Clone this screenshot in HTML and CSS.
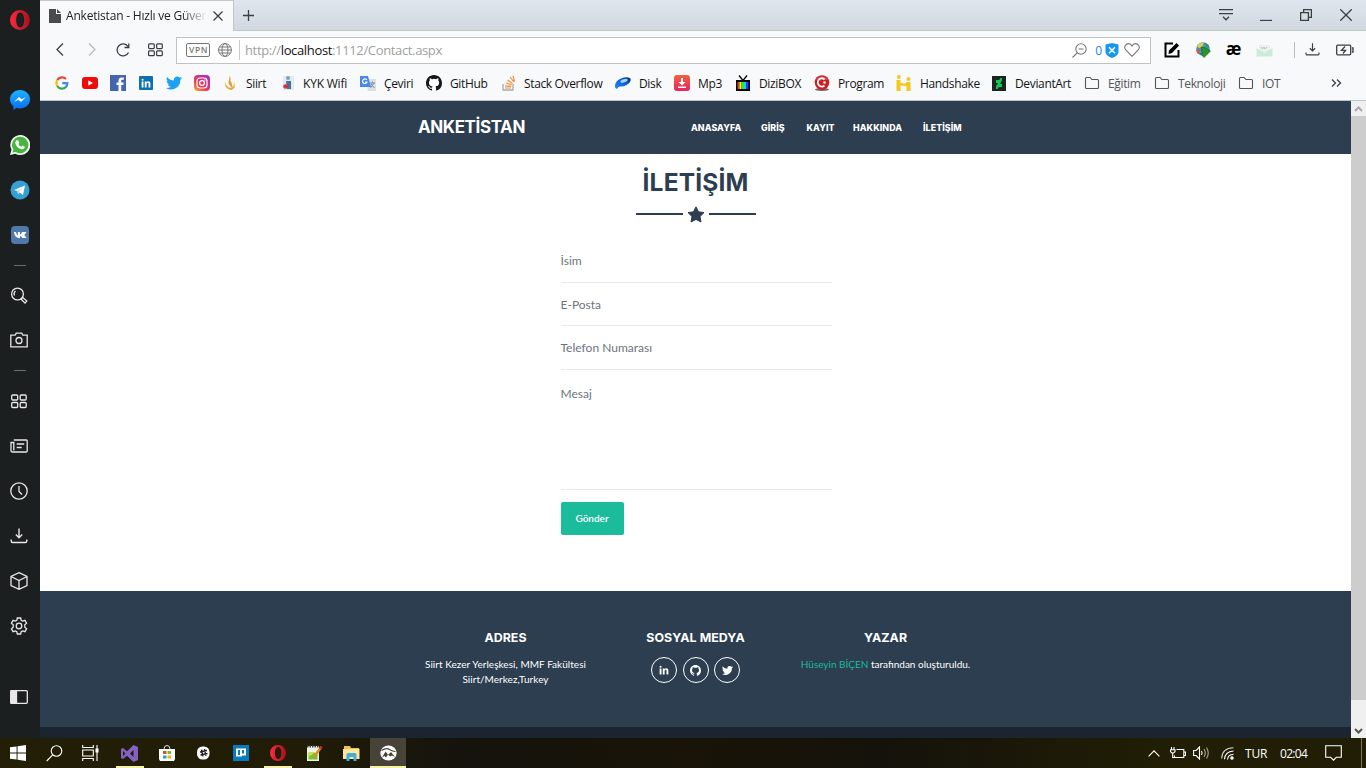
FILE: index.html
```html
<!DOCTYPE html>
<html lang="tr">
<head>
<meta charset="utf-8">
<title>Anketistan - Hızlı ve Güvenilir</title>
<link rel="stylesheet" href="styles.css">
</head>
<body>
<svg class="defs" width="0" height="0">
  <defs>
    <linearGradient id="gOp" x1="0" x2="1"><stop offset="0" stop-color="#ff2a3c"/><stop offset="1" stop-color="#a8101f"/></linearGradient>
    <linearGradient id="gMs" x1="0" y1="0" x2="0" y2="1"><stop offset="0" stop-color="#19b4ff"/><stop offset="1" stop-color="#0a6cf5"/></linearGradient>
    <linearGradient id="gIg" x1="0" y1="1" x2=".8" y2="0"><stop offset="0" stop-color="#fdb63b"/><stop offset=".4" stop-color="#ee3a50"/><stop offset="1" stop-color="#a52fc2"/></linearGradient>
    <linearGradient id="gMp" x1="0" y1="0" x2="0" y2="1"><stop offset="0" stop-color="#f4613f"/><stop offset="1" stop-color="#e8235f"/></linearGradient>
    <linearGradient id="gDk" x1="0" y1="1" x2="1" y2="0"><stop offset="0" stop-color="#1f8bff"/><stop offset=".6" stop-color="#0b5fd0"/><stop offset="1" stop-color="#08275e"/></linearGradient>
    <symbol id="opera" viewBox="0 0 20 20"><path fill="url(#gOp)" fill-rule="evenodd" d="M10 0a10 10 0 1 0 0 20a10 10 0 1 0 0-20zM10.200 2.500c2.500 0 4 3.300 4 7.500s-1.500 7.500-4 7.500s-4-3.300-4-7.500s1.500-7.500 4-7.500z"/></symbol>
    <symbol id="grid" viewBox="0 0 18 18"><g fill="none" stroke="currentColor" stroke-width="1.300"><rect x="1.700" y="3" width="6" height="5" rx="1"/><rect x="10.200" y="3" width="6" height="5" rx="1"/><rect x="1.700" y="10.500" width="6" height="5" rx="1"/><rect x="10.200" y="10.500" width="6" height="5" rx="1"/></g></symbol>
    <symbol id="github" viewBox="0 0 16 16"><path fill="currentColor" d="M8 0C3.580 0 0 3.580 0 8c0 3.540 2.290 6.530 5.470 7.590.4.070.55-.17.55-.38v-1.490c-2.010.37-2.530-.49-2.690-.94-.09-.23-.48-.94-.82-1.130-.28-.15-.68-.52-.01-.53.63-.01 1.080.58 1.230.82.72 1.210 1.870.87 2.330.66.07-.52.28-.87.51-1.070-1.780-.2-3.640-.89-3.640-3.950 0-.87.31-1.590.82-2.150-.08-.2-.36-1.020.08-2.120 0 0 .67-.21 2.200.82a7.600 7.600 0 0 1 4 0c1.530-1.040 2.200-.82 2.200-.82.44 1.100.16 1.920.08 2.120.51.56.82 1.270.82 2.150 0 3.070-1.870 3.750-3.650 3.950.29.25.54.73.54 1.480v2.200c0 .21.15.46.55.38A8 8 0 0 0 16 8c0-4.420-3.580-8-8-8z"/></symbol>
    <symbol id="twitter" viewBox="0 0 24 24"><path fill="currentColor" d="M24 4.600a10 10 0 0 1-2.800.8 5 5 0 0 0 2.100-2.700c-1 .6-2 1-3.100 1.200a4.900 4.900 0 0 0-8.400 4.500A14 14 0 0 1 1.700 3.100a4.900 4.900 0 0 0 1.500 6.600 5 5 0 0 1-2.200-.6 4.900 4.900 0 0 0 3.900 4.900 5 5 0 0 1-2.200.1 4.900 4.900 0 0 0 4.600 3.400A10 10 0 0 1 0 19.500 14 14 0 0 0 21.500 7.100 10 10 0 0 0 24 4.600z"/></symbol>
    <symbol id="linkedin" viewBox="0 0 16 16"><path fill="currentColor" d="M1 5.500h3V15H1zM2.500 1a1.700 1.700 0 1 1 0 3.400a1.700 1.700 0 0 1 0-3.400zM6 5.500h2.900v1.300c.5-.9 1.500-1.500 2.800-1.500 2.700 0 3.300 1.700 3.300 4.200V15h-3v-5c0-1.200-.1-2.300-1.500-2.300S9 8.900 9 10v5H6z"/></symbol>
    <symbol id="folder" viewBox="0 0 16 16"><path fill="none" stroke="#555" stroke-width="1.100" d="M1.500 3.500a1 1 0 0 1 1-1h3.600l1.800 2h5.600a1 1 0 0 1 1 1v7a1 1 0 0 1-1 1h-11a1 1 0 0 1-1-1z"/></symbol>
    <symbol id="download" viewBox="0 0 18 18"><path fill="none" stroke="currentColor" stroke-width="1.400" d="M9 1.500V10.500M5.800 7.500L9 10.700 12.200 7.500M1.200 12.500v1.500q0 1.500 1.500 1.500h12.600q1.500 0 1.500-1.500v-1.500"/></symbol>
  </defs>
</svg>

<div class="desktop">
  <aside class="side">
    <div class="cell first"><svg width="20" height="20"><use href="#opera"/></svg></div>
    <div class="cell"><svg width="20" height="20" viewBox="0 0 20 20"><path fill="url(#gMs)" d="M10 0C4.500 0 0 4 0 9.300c0 2.900 1.300 5.300 3.400 7V20l3.100-1.900c1.100.3 2.300.5 3.500.5 5.500 0 10-4 10-9.300S15.500 0 10 0z"/><path fill="#fff" d="M4 12l5-5 2.500 2.300L16 7l-5 5-2.500-2.300z"/></svg></div>
    <div class="cell"><svg width="20" height="20" viewBox="0 0 20 20"><path fill="#f4f4ee" d="M10 0a10 10 0 1 1-4.600 18.700L0 20l1.500-5.200A10 10 0 0 1 10 0z"/><path fill="#45b53d" d="M10 1.800a8.200 8.200 0 1 1-4.300 15.100l-3.200.7.9-3.100A8.200 8.200 0 0 1 10 1.800z"/><path fill="#fff" d="M7 5.300l1.300.2 1 2.200-1 1.200a6 6 0 0 0 3 2.800l1.200-1.200 2.200 1.100c.2 2-1.500 2.900-3 2.700-3.500-.6-6-3.500-6.400-6.200C5.200 6.700 6 5.600 7 5.300z"/></svg></div>
    <div class="cell"><svg width="20" height="20" viewBox="0 0 20 20"><circle cx="10" cy="10" r="9.500" fill="#36a0d4"/><path fill="#fff" d="M4 10l11-4.500-2 9.500-3.500-2.500L8 14l-.6-3z"/><path fill="#b9d8e8" d="M7.400 11L13 7l-4 5-1 2z"/></svg></div>
    <div class="cell"><svg width="18" height="18" viewBox="0 0 18 18"><rect width="18" height="18" rx="4" fill="#5078aa"/><path fill="#fff" d="M3 6h2c.3 2 1 3 1.800 3.400V6H9v2.500c1-.3 1.700-1.400 2.100-2.500h2c-.3 1.300-1 2.300-2 3 1.100.6 2 1.600 2.500 3h-2.300c-.4-1-1.200-1.700-2.300-1.900V12C5.500 12.200 3.400 10 3 6z"/><path fill="#fff" d="M12 6h3.500l-2.200 3 2.400 3H13l-2-3z"/></svg></div>
    <div class="rule"></div>
    <div class="cell low"><svg width="18" height="18" viewBox="0 0 18 18" class="ln"><circle cx="7.500" cy="7" r="5.900"/><path d="M4.500 8.500a3.600 3.600 0 0 1 1-4.500M11.500 11.500l1.300-1 4 3.600-1.800 2-3.800-3.800z"/></svg></div>
    <div class="cell low"><svg width="18" height="18" viewBox="0 0 18 18" class="ln"><path d="M.8 4.200h4.400l1-2h5.600l1 2h4.400v11.600H.8z"/><circle cx="9" cy="9.500" r="3"/></svg></div>
    <div class="rule r2"></div>
    <div class="cell"><svg width="18" height="18" class="off"><use href="#grid"/></svg></div>
    <div class="cell"><svg width="18" height="18" viewBox="0 0 18 18" class="ln"><path d="M3.800 3h12.400q1 0 1 1v10q0 1-1 1H2.500q-1.500 0-1.500-1.500V5.500h2.800v8M6.700 7h7.500M6.700 10.500h5"/></svg></div>
    <div class="cell"><svg width="18" height="18" viewBox="0 0 18 18" class="ln"><circle cx="9" cy="9" r="8.200"/><path d="M9 4v5.500l3 3"/></svg></div>
    <div class="cell"><svg width="18" height="18" class="off"><use href="#download"/></svg></div>
    <div class="cell"><svg width="18" height="18" viewBox="0 0 18 18" class="ln"><path d="M9 .7l8 3.800v9L9 17.300l-8-3.800v-9zM1 4.500l8 4 8-4M9 8.500v8.800"/></svg></div>
    <div class="cell"><svg width="18" height="18" viewBox="0 0 18 18" class="ln"><path d="M7.300 1h3.400l.5 2.300 1.400.8 2.300-.8 1.700 2.900-1.800 1.600v2.400l1.800 1.600-1.700 2.900-2.300-.8-1.400.8-.5 2.300H7.300l-.5-2.300-1.400-.8-2.300.8-1.700-2.900 1.800-1.600V7.800L1.400 6.200l1.700-2.900 2.300.8 1.400-.8z"/><circle cx="9" cy="9" r="2.800"/></svg></div>
    <div class="cell last"><svg width="18" height="14" viewBox="0 0 18 14" class="ln"><rect x=".7" y=".7" width="16.600" height="12.600" rx="1"/><path fill="#e8e8e8" d="M1 1h5.500v12H1z"/></svg></div>
  </aside>

  <div class="browser">
    <div class="tabs">
      <div class="tab">
        <svg width="12" height="14" viewBox="0 0 12 14"><path fill="#4b4b4b" d="M0 0h7v5h5v9H0z"/><path fill="#4b4b4b" d="M8 0l4 4H8z"/></svg>
        <span class="tabname">Anketistan - Hızlı ve Güver</span>
        <svg width="10" height="10" viewBox="0 0 10 10" class="dk"><path d="M.5.5l9 9M9.500.5l-9 9"/></svg>
      </div>
      <svg class="plus dk" width="11" height="11" viewBox="0 0 11 11"><path d="M5.500 0v11M0 5.500h11"/></svg>
      <div class="wins">
        <svg width="14" height="12" viewBox="0 0 14 12" class="dk"><path d="M0 .7h14M0 4.700h14M4 7.800l3 3 3-3"/></svg>
        <svg width="12" height="12" viewBox="0 0 12 12" class="dk"><path d="M0 11.500h12"/></svg>
        <svg width="12" height="12" viewBox="0 0 12 12" class="dk"><path d="M.6 3.600h7.800v7.800H.6zM3.600 3.600v-3h7.800v7.800h-3"/></svg>
        <svg width="12" height="12" viewBox="0 0 12 12" class="dk"><path d="M.3.300l11.400 11.400M11.700.3L.3 11.700"/></svg>
      </div>
    </div>

    <div class="toolbar">
      <div class="navs">
        <svg width="8" height="13" viewBox="0 0 8 13" class="dk"><path d="M7 .5l-6 6 6 6"/></svg>
        <svg width="8" height="13" viewBox="0 0 8 13" class="dk dim"><path d="M1 .5l6 6-6 6"/></svg>
        <svg width="14" height="14" viewBox="0 0 14 14" class="dk rl"><path d="M12.500 9.500A6 6 0 1 1 12 3.500M12.800.5V4.500H8.500"/></svg>
        <svg width="17" height="17" class="gr"><use href="#grid"/></svg>
      </div>
      <div class="addr">
        <span class="vpn">VPN</span>
        <svg width="14" height="14" viewBox="0 0 14 14" class="globe"><circle cx="7" cy="7" r="6.400"/><ellipse cx="7" cy="7" rx="3" ry="6.400"/><path d="M.6 7h12.800M1.500 4h11M1.500 10h11"/></svg>
        <span class="url">http://<b>localhost</b>:1112/Contact.aspx</span>
        <svg width="15" height="15" viewBox="0 0 15 15" class="gy"><circle cx="9" cy="6" r="5.200"/><path d="M5.200 9.800L.5 14.500M6.500 6h5"/></svg>
        <span class="zero">0</span>
        <svg width="14" height="15" viewBox="0 0 14 15"><path fill="#1497f0" d="M7 0l6.500 1.500V9q0 3.500-6.500 6Q.5 12.500.5 9V1.500z"/><path stroke="#fff" stroke-width="1.500" d="M4 4.200l6 6M10 4.200l-6 6"/></svg>
        <svg width="16" height="14" viewBox="0 0 16 14" class="gy heart"><path d="M8 13.300L1.800 7C-1 3.500 2.300.6 4.500.6 6.500.6 7.500 2 8 3 8.500 2 9.500.6 11.500.6c2.200 0 5.500 2.900 2.700 6.400z"/></svg>
      </div>
      <div class="exts">
        <svg width="16" height="16" viewBox="0 0 16 16"><path fill="none" stroke="#000" stroke-width="2" d="M9 1.500H1.500v13h13V8"/><path d="M4.500 12l.5-3.500L12.500 1 15 3.500 8 11z"/></svg>
        <svg width="16" height="16" viewBox="0 0 16 16"><circle cx="8" cy="7" r="6.800" fill="#4a8fcf"/><path fill="#e8d23c" d="M2 4q3-4 7-3.500L7 5 4 6z"/><path fill="#3d9a46" d="M10 1q4 1 4.500 5L11 5z"/><path fill="#da5a32" d="M1.200 7l3 .5.5 4-2 .5q-1.500-2-1.500-5z"/><path fill="#26952d" stroke="#14671a" stroke-width=".6" d="M6 5l5 1 4.500 3L13 11.500 9 15.500 5.500 11.500h2z"/></svg>
        <span class="ae">æ</span>
        <svg width="17" height="14" viewBox="0 0 17 14"><path fill="#e9f1ed" d="M3 2h11v8H3z"/><path fill="#cdebdc" d="M.5 5l8 5 8-5v8.500H.5z"/><path fill="none" stroke="#b9c7c1" d="M5 4l1.500 2L8 4l1 2 2-2"/></svg>
        <i></i>
        <svg width="15" height="15" class="gr"><use href="#download"/></svg>
        <svg width="18" height="12" viewBox="0 0 18 12" class="dk"><rect x=".7" y="1.200" width="14" height="9.600" rx="1"/><path d="M16 4h1v4h-1M9 2.500L5.500 6.300h4L7 9.500"/></svg>
      </div>
    </div>

    <nav class="marks">
      <a class="m27"><svg width="14" height="14" viewBox="0 0 14 14" fill="none" stroke-width="2.200"><path stroke="#ea4335" d="M2.300 4a5.400 5.400 0 0 1 8.600-1"/><path stroke="#fbbc05" d="M2.300 4a5.800 5.800 0 0 0 0 6"/><path stroke="#34a853" d="M2.300 10a5.400 5.400 0 0 0 8.600 1"/><path stroke="#4285f4" d="M7.300 7.200h5q0 2.500-1.600 4"/></svg></a>
      <a class="m28"><svg width="16" height="12" viewBox="0 0 16 12"><rect width="16" height="12" rx="3" fill="#f00b0b"/><path fill="#fff" d="M6.300 3.300L11 6 6.300 8.700z"/></svg></a>
      <a class="m29"><svg width="16" height="16" viewBox="0 0 16 16"><path fill="#4565ad" d="M0 0h16v16H0z"/><path fill="#fff" d="M8.500 16v-6H6.500V7.500h2V5.700C8.500 3.600 9.700 2.500 11.800 2.500h2v2.300h-1.400c-1 0-1.200.5-1.200 1.200v1.500h2.500l-.4 2.500h-2.100v6z"/></svg></a>
      <a class="m27"><svg width="14" height="14" viewBox="0 0 14 14"><rect width="14" height="14" rx="1" fill="#0a70b2"/><use href="#linkedin" x="2" y="2" width="10" height="10" color="#fff"/></svg></a>
      <a class="m28"><svg width="16" height="16" color="#1da1f2"><use href="#twitter"/></svg></a>
      <a class="m28"><svg width="16" height="16" viewBox="0 0 16 16"><rect width="16" height="16" rx="4" fill="url(#gIg)"/><rect x="3" y="3" width="10" height="10" rx="3" fill="none" stroke="#fff" stroke-width="1.200"/><circle cx="8" cy="8" r="2.400" fill="none" stroke="#fff" stroke-width="1.200"/><circle cx="11" cy="5" r=".7" fill="#fff"/></svg></a>
      <a class="m58"><svg width="16" height="16" viewBox="0 0 16 16"><path fill="#e29b37" d="M7 1c3 2 .5 4 2 6s2 5-1 7c3-3-2-4-1.500-7S8 3 7 1z"/><path fill="#f2c15a" d="M3 7c1 3 2.500 5 4.500 7-3 0-5.500-4-4.500-7zM12.500 6c1 4-1 7-4.500 9 1.500-3 4.500-5 4.500-9z"/><path fill="#e8a53a" d="M3 9q1 5 6 6 4-1 4-5-2 3-4 3-3 0-6-4z"/></svg>Siirt</a>
      <a class="m80"><svg width="16" height="16" viewBox="0 0 16 16"><path fill="#e5eaf0" d="M3 1h11v14H3z"/><circle cx="8" cy="3" r="2" fill="#7fa0b8"/><path fill="#467099" d="M6 6h5v8H7z"/><circle cx="5.500" cy="11.500" r="2.300" fill="#de2e37"/></svg><span class="kyk">KYK Wifi</span></a>
      <a class="m66"><svg width="16" height="16" viewBox="0 0 16 16"><path fill="#dcdfe3" d="M6 4h10v12H8z"/><path fill="#4a88ea" d="M0 1h8l3 11H0z"/><path fill="none" stroke="#fff" stroke-width="1.200" d="M6.800 5A2.300 2.300 0 1 0 7 7H5"/><path fill="none" stroke="#7f8c96" d="M10 8h5M12.500 6.500V8M14 8l-3.500 5M11 9l3.500 4"/></svg>Çeviri</a>
      <a class="m76"><svg width="16" height="16" color="#161616"><use href="#github"/></svg>GitHub</a>
      <a class="m113 so"><svg width="15" height="16" viewBox="0 0 15 16" fill="none"><path stroke="#aaa" stroke-width="1.300" d="M1 9v6h10V9"/><path stroke="#ef8d3c" stroke-width="1.200" d="M3 13h6M3.200 10.800l6 .6M4 8l5.600 1.800M5.500 5l5 3.500M8 2l4 5M11 1l1.500 5.500"/></svg>Stack Overflow</a>
      <a class="m59"><svg width="16" height="16" viewBox="0 0 16 16"><path fill="url(#gDk)" d="M0 12q-.5-5 5-8 6-3 10.500-.5 1 4-4 6.500Q8 12 5 11.500 3 11.500 2 14 .5 13.500 0 12z"/><ellipse cx="9" cy="5.800" rx="3.800" ry="1.500" transform="rotate(-18 9 5.800)" fill="#a5d4fb"/></svg>Disk</a>
      <a class="m61"><svg width="16" height="16" viewBox="0 0 16 16"><rect width="16" height="16" rx="3" fill="url(#gMp)"/><path fill="#fff" d="M7 3h2v4h2.500L8 10.500 4.500 7H7zM4 11.500h8V13H4z"/></svg>Mp3</a>
      <a class="m79"><svg width="16" height="16" viewBox="0 0 16 16"><path d="M1 5h14v11H1z"/><path fill="none" stroke="#000" stroke-width="1.300" d="M4 .5l4 5 4-5"/><path fill="#f33" d="M2.500 7h2v7h-2z"/><path fill="#ff0" d="M4.500 7h2v7h-2z"/><path fill="#2e3" d="M6.500 7h2.500v7H6.500z"/><path fill="#0df" d="M9 7h2v7H9z"/><path fill="#33f" d="M11 7h2.500v7H11z"/></svg>DiziBOX</a>
      <a class="m82"><svg width="16" height="16" viewBox="0 0 16 16"><ellipse cx="8" cy="14.500" rx="7" ry="1.500" fill="#7a5d5d"/><circle cx="8" cy="7.500" r="7.300" fill="#cf1d22"/><path fill="#f6c8c8" opacity=".5" d="M2 5q6-7 12 0-6-2-12 0z"/><path fill="none" stroke="#fff" stroke-width="1.800" d="M10.500 10.500a4 4 0 1 1 0-6"/><circle cx="10.500" cy="7.500" r="1.300" fill="#fff"/></svg>Program</a>
      <a class="m96"><svg width="16" height="16" viewBox="0 0 16 16" fill="#f4c81d"><circle cx="2.800" cy="2" r="2"/><circle cx="12.500" cy="4" r="2"/><path d="M.5 5h4v3l5 .5 1-1.500h4v9h-4v-5l-6-.5V16h-4z"/></svg>Handshake</a>
      <a class="m93"><svg width="14" height="15" viewBox="0 0 14 15"><path fill="#1d2421" d="M0 0h14v15H0z"/><path fill="#0bcd54" d="M10 2v2.500L8 8h2v3H6.800L5.500 13H4v-2.500L6 7H4V4h3.200L8.500 2z"/></svg><span class="da">DeviantArt</span></a>
      <a class="m69 fo"><svg width="16" height="16"><use href="#folder"/></svg>Eğitim</a>
      <a class="m84 fo"><svg width="16" height="16"><use href="#folder"/></svg>Teknoloji</a>
      <a class="m93 fo"><svg width="16" height="16"><use href="#folder"/></svg>IOT</a>
      <svg width="11" height="8" viewBox="0 0 11 8" class="dk"><path d="M1 .5L4.500 4 1 7.500M6 .5L9.500 4 6 7.500"/></svg>
    </nav>

    <div class="view">
      <div class="page">
        <header class="navbar"><div class="wrap">
          <span class="brand">ANKETİSTAN</span>
          <div class="menu"><a class="i70">ANASAYFA</a><a class="i45">GİRİŞ</a><a class="i47">KAYIT</a><a class="i70">HAKKINDA</a><a>İLETİŞİM</a></div>
        </div></header>
        <main>
          <h1>İLETİŞİM</h1>
          <div class="star"><i></i><svg width="18" height="17" viewBox="0 0 18 17"><path fill="#2c3e50" stroke="#2c3e50" stroke-linejoin="round" d="M9 .8l2.500 5 5.500.8-4 3.900 1 5.500-5-2.600-5 2.600 1-5.500-4-3.900 5.500-.8z"/></svg><i></i></div>
          <form>
            <div class="field">İsim</div>
            <div class="field f2">E-Posta</div>
            <div class="field">Telefon Numarası</div>
            <div class="field area">Mesaj</div>
            <button type="button">Gönder</button>
          </form>
        </main>
        <footer>
          <section><h4>ADRES</h4><p class="adr">Siirt Kezer Yerleşkesi, MMF Fakültesi<br>Siirt/Merkez,Turkey</p></section>
          <section><h4>SOSYAL MEDYA</h4><div class="soc">
            <a><svg width="10" height="10"><use href="#linkedin"/></svg></a><a><svg width="11" height="11"><use href="#github"/></svg></a><a><svg width="11" height="11"><use href="#twitter"/></svg></a>
          </div></section>
          <section><h4>YAZAR</h4><p><a class="author">Hüseyin BİÇEN</a> tarafından oluşturuldu.</p></section>
        </footer>
        <div class="copy"></div>
      </div>
      <div class="scroll">
        <svg width="9" height="6" viewBox="0 0 9 6"><path fill="none" stroke="#aaa" stroke-width="2" d="M1 5l3.500-3.500L8 5"/></svg>
        <div class="thumb"></div>
        <svg width="9" height="6" viewBox="0 0 9 6"><path fill="none" stroke="#555" stroke-width="2" d="M1 1l3.500 3.500L8 1"/></svg>
      </div>
    </div>
  </div>
</div>

<div class="taskbar">
  <div class="t36"><svg width="16" height="16" viewBox="0 0 17 17" fill="#fff"><path d="M0 2.500L7 1.500V8H0zM8 1.300L17 0v8H8zM0 9h7v6.500L0 14.500zM8 9h9v8l-9-1.300z"/></svg></div>
  <div class="t36"><svg width="17" height="17" viewBox="0 0 17 17" class="tl"><circle cx="10.500" cy="6" r="5.300"/><path d="M6.700 9.800L.7 16"/></svg></div>
  <div class="t36 tv"><svg width="17" height="16" viewBox="0 0 17 16" class="tl"><path d="M.7 0v2.500h10.600V0M.7 16v-2.500h10.600V16M.7 5h10.600v6H.7zM15 0v16"/><path fill="#fff" d="M14 4h2v3h-2z"/></svg></div>
  <div class="t37 run"><svg width="17" height="17" viewBox="0 0 17 17"><path fill="#8661c5" fill-rule="evenodd" d="M12.500 0L17 2v13l-4.500 2L6 10.700 2 14l-2-1V4l2-1 4 3.300zM12.500 5L9 8.500l3.500 3.500zM2 6v5l2.500-2.500z"/></svg></div>
  <div class="t37"><svg width="16" height="16" viewBox="0 0 16 16"><path fill="none" stroke="#ddd" d="M5 4q0-3.500 3-3.500T11 4"/><path fill="#fff" d="M0 4h16v10l-1 2H1l-1-2z"/><path fill="#e3502c" d="M4 6h3.500v3H4z"/><path fill="#7bb829" d="M8.500 6H12v3H8.500z"/><path fill="#249fd8" d="M4 10.500h3.500v3H4z"/><path fill="#f5b400" d="M8.500 10.500H12v3H8.500z"/></svg></div>
  <div class="t37"><svg width="13" height="14" viewBox="0 0 13 14"><rect width="12.500" height="13" y=".5" rx="5.500" fill="#fff"/><path stroke="#222" stroke-width="1.300" d="M4.500 3.500l1.500 7M7.500 3l1.500 7M3 6l7-1.500M3.500 9l7-1.500"/></svg></div>
  <div class="t37"><svg width="16" height="16" viewBox="0 0 16 16"><path fill="#087abe" d="M0 0h16v16H0z"/><path fill="#fff" d="M3 3.500h10v7H9v1H3z"/><path fill="#087abe" d="M5 5h2v5H5zM9 5h2v3.500H9z"/></svg></div>
  <div class="t37 run"><svg width="16" height="16"><use href="#opera"/></svg></div>
  <div class="t37"><svg width="17" height="16" viewBox="0 0 17 16"><path fill="#eef3e6" d="M1 1h12v15H1z"/><path fill="#72c532" d="M2.500 8h9v6.500h-9z"/><path fill="#c7df4e" d="M2.500 7h7l-7 5z"/><path stroke="#444" stroke-width="2" stroke-dasharray="1.500 1" d="M1 1.500h12"/><path stroke="#d98b29" stroke-width="2.500" d="M14.500 3L8 12"/><path stroke="#d22c2c" stroke-width="2.500" d="M15.500 1.500L14 3.700"/></svg></div>
  <div class="t37"><svg width="17" height="15" viewBox="0 0 17 15"><path fill="#efc14e" d="M1 0h6l1 2h8v4H1z"/><path fill="#fce79b" d="M0 3h16.500v10H0z"/><path fill="#43aedb" d="M3.500 8.500q0-1.500 1.500-1.500h7q1.500 0 1.500 1.500V15h-3v-4h-4v4h-3z"/></svg></div>
  <div class="t37 act"><svg width="17" height="16" viewBox="0 0 17 16"><ellipse cx="8.500" cy="8" rx="8.200" ry="7.600" fill="#fff"/><path fill="#484338" d="M2 12.500l3.500-6 2.500 3 1.500-1L11 7l4 5-3-1.500-2 1-2-2-2 3-1.500-1.500z"/><path fill="none" stroke="#484338" stroke-width="1.200" d="M1.500 5.500q5-3 8-1t6 2"/></svg></div>
  <div class="tray">
    <svg class="s1 tl" width="12" height="7" viewBox="0 0 12 7"><path d="M.6 6.300L6 .9l5.400 5.400"/></svg>
    <svg class="s2 tl" width="16" height="12" viewBox="0 0 16 12"><path d="M6.500 2.500h7.300v8H4.500V8.500M14 5h1.500v3.500H14M1.500 0v2.500M4 0v2.500M.5 2.800h4.500v2L3.500 6H2L.5 4.800zM2.700 6v4.500h2"/></svg>
    <svg class="s3 tl" width="16" height="14" viewBox="0 0 16 14"><path d="M.6 4.500h2.500L6.500 1v12L3.100 9.500H.6z"/><path d="M8.500 5q1.200 2 0 4"/><path opacity=".6" d="M11 3q2.500 4 0 8M13.500 1.500q3.500 5.500 0 11"/></svg>
    <svg class="s4 tl" width="13" height="13" viewBox="0 0 13 13"><path opacity=".8" d="M.7 11.500Q1 1 12.500.8"/><path d="M3.500 12.300Q4 4.500 12.500 4M6.500 12.500Q7 7.500 12.500 7.200"/><circle cx="11" cy="11" r="1.200" fill="#fff"/></svg>
    <span class="tur">TUR</span><span class="clock">02:04</span>
    <svg class="s5 tl" width="17" height="16" viewBox="0 0 17 16"><path d="M.7.7h15.600v11.600h-5l-2.800 2.800-2.800-2.800h-5z"/></svg>
    <i></i>
  </div>
</div>
</body>
</html>
```
FILE: styles.css
```css
* { box-sizing: border-box; }
body { margin: 0; width: 1366px; height: 768px; overflow: hidden; font-family: "Open Sans", sans-serif; font-size: 12px; color: #222; }
svg { flex: none; display: block; }
.defs { position: absolute; }
.desktop { display: flex; height: 738px; }

.side { width: 40px; background: #1b1f1f; color: #e8e8e8; display: flex; flex-direction: column; }
.cell { height: 45px; display: flex; align-items: center; justify-content: center; flex: none; }
.cell.first { height: 40px; margin-bottom: 37px; }
.cell.low { height: 44px; }
.cell.last { margin-top: 26px; }
.cell .ln, .cell .off { margin-right: 2px; }
.rule { height: 17px; display: flex; align-items: center; justify-content: center; }
.rule.r2 { height: 16px; padding-top: 1px; }
.rule::after { content: ""; width: 12px; height: 1px; background: #6c6f6f; }
.ln { fill: none; stroke: #e8e8e8; stroke-width: 1.3; }
.dk { fill: none; stroke: #3c3f42; stroke-width: 1.3; }
.dim { stroke: #bbb; }
.gr { color: #3c3f42; }
.gy { fill: none; stroke: #777; stroke-width: 1.1; }

.browser { flex: 1; display: flex; flex-direction: column; background: #f7f9fb; }
.tabs { height: 31px; background: linear-gradient(#dfe6ee, #d2d8df); border-bottom: 1px solid #c3c7ca; display: flex; align-items: flex-start; }
.tab { width: 194px; height: 31px; background: #f7f9fb; border-top: 1px solid #c8c8c8; border-right: 1px solid #c3c7ca; display: flex; align-items: center; padding-left: 9px; }
.tabname { width: 141px; margin: -1px 12px 0 5px; white-space: nowrap; overflow: hidden; letter-spacing: -.2px; -webkit-mask-image: linear-gradient(90deg, #000 82%, transparent); mask-image: linear-gradient(90deg, #000 82%, transparent); }
.tab .dk { margin-left: -6px; }
.plus { margin: 10px 0 0 9px; }
.wins { margin-left: auto; display: flex; gap: 27px; padding: 9px 14px 0 0; }
.wins svg:first-child { margin-right: 1px; }
.wins svg:nth-child(2) { margin-right: 1px; margin-left: -1px; }
.wins svg:nth-child(3) { margin-right: 1px; }
.toolbar { height: 37px; display: flex; align-items: center; }
.navs { width: 136px; display: flex; align-items: center; padding-left: 16px; }
.navs svg:nth-child(2) { margin-left: 24px; }
.navs .rl { margin-left: 20px; }
.navs .gr { margin-left: 17px; }
.addr { width: 975px; height: 27px; margin-top: 1px; background: #fff; border: 1px solid #c0c3c6; display: flex; align-items: center; padding: 0 10px 0 9px; }
.vpn { width: 24px; height: 14px; border: 1px solid #777; border-radius: 2px; font-size: 8.5px; line-height: 12px; font-weight: 600; text-align: center; color: #777; letter-spacing: .6px; padding-left: 1px; }
.globe { margin-left: 8px; fill: none; stroke: #777; }
.url { margin-left: 7px; padding-left: 5px; border-left: 1px solid #ccc; line-height: 20px; color: #a0a0a0; font-size: 13px; letter-spacing: -.35px; margin-right: auto; }
.url b { font-weight: 400; color: #111; }
.zero { color: #1a86e0; margin: 0 3px 0 8px; }
.heart { margin-left: 5px; }
.exts { flex: 1; display: flex; align-items: center; padding-left: 13px; }
.exts svg:nth-child(2) { margin-left: 15px; }
.ae { font: bold 17px/18px "Open Sans", sans-serif; color: #000; width: 16px; margin: -2px 0 0 14px; letter-spacing: -1px; display: flex; justify-content: center; }
.ae + svg { margin-left: 15px; }
.exts i { width: 1px; height: 16px; background: #bbb; margin: 0 11px 0 21px; }
.exts .gr { margin-left: -1px; }
.exts svg:last-child { margin-left: 16px; }

.marks { height: 33px; display: flex; align-items: center; padding: 0 0 2px 15px; border-bottom: 1px solid #bcc6cc; color: #151515; }
.marks a { display: flex; align-items: center; gap: 8px; flex: none; white-space: nowrap; letter-spacing: -.35px; }
.marks .so { gap: 7px; }
.kyk { letter-spacing: -.2px; margin-left: -1px; }
.da { margin-left: 1px; }
.marks .fo { color: #555; gap: 8px; }
.m27 { width: 27px; } .m28 { width: 28px; } .m29 { width: 29px; } .m58 { width: 58px; } .m80 { width: 80px; }
.m66 { width: 66px; } .m76 { width: 76px; } .m113 { width: 113px; } .m59 { width: 59px; } .m61 { width: 61px; }
.m79 { width: 79px; } .m82 { width: 82px; } .m96 { width: 96px; } .m93 { width: 93px; } .m69 { width: 69px; } .m84 { width: 84px; }
.marks .m69 { margin-left: -1px; width: 70px; }

.view { flex: 1; display: flex; min-height: 0; }
.page { flex: 1; background: #fff; display: flex; flex-direction: column; font-family: Lato, sans-serif; }
.navbar { height: 53px; background: #2c3e50; color: #fff; font-family: Inter, sans-serif; font-weight: 700; }
.wrap { width: 555px; height: 53px; margin: 0 auto; display: flex; align-items: center; padding-bottom: 1px; }
.brand { font-size: 17px; width: 273px; letter-spacing: -.4px; }
.menu { display: flex; font-size: 8.8px; font-weight: 800; padding-top: 1px; letter-spacing: .1px; }
.i70 { width: 70px; } .i45 { width: 45.5px; } .i47 { width: 46.5px; }
main { height: 437px; display: flex; flex-direction: column; align-items: center; }
h1 { margin: 12px 0 0; font: 700 24.5px/32px Inter, sans-serif; letter-spacing: .15px; color: #2c3e50; }
.star { display: flex; align-items: center; gap: 4px; height: 18px; margin-top: 7px; }
.star i { width: 47px; height: 2px; background: #2c3e50; }
form { width: 271px; margin: 16px 0 0 1px; }
.field { height: 44px; border-bottom: 1px solid #e7eaec; line-height: 43px; font-size: 12px; color: #6c757d; }
.f2 { height: 43px; }
.area { height: 120px; line-height: 48px; }
button { display: block; width: 63px; height: 33px; margin-top: 12px; border: 0; border-radius: 2px; background: #1abc9c; color: #fff; font: 10px Lato, sans-serif; font-weight: 600; padding: 0 0 1px; }
footer { height: 136px; background: #2c3e50; color: #fff; display: flex; justify-content: center; text-align: center; padding-top: 39px; }
footer section { width: 190px; }
h4 { margin: 0 0 11px; font: 700 12.4px/16px Inter, sans-serif; letter-spacing: .05px; }
footer p { margin: 0; font-size: 10px; line-height: 15px; white-space: nowrap; }
.adr { letter-spacing: .04px; }
.author { color: #1abc9c; }
.soc { display: flex; justify-content: center; gap: 5.5px; }
.soc a { width: 26px; height: 26px; border: 1px solid #fff; border-radius: 50%; display: flex; align-items: center; justify-content: center; }
.copy { flex: 1; background: #1a252f; }
.scroll { width: 15px; background: #f0f0f0; display: flex; flex-direction: column; align-items: center; padding: 5px 0 4px; justify-content: space-between; }
.thumb { width: 15px; height: 584px; margin: 4px 0 auto; background: #cdcdcd; }

.taskbar { height: 30px; display: flex; background: linear-gradient(90deg, #231e06, #211c07 22%, #15130d 34%, #191407 50%, #15120b 65%, #211e05 85%); color: #fff; }
.taskbar > div { height: 30px; display: flex; align-items: center; justify-content: center; }
.t36 { width: 36px; }
.tv { margin-right: 3px; }
.t37 { width: 37px; }
.run { box-shadow: inset 0 -2px #f5f2a5; clip-path: inset(0 4px 0 5px); }
.taskbar .act { width: 36px; background: #484338; box-shadow: inset 0 -2px #f5f2a5; }
.tl { fill: none; stroke: #fff; stroke-width: 1.1; }
.taskbar .tray { margin-left: auto; justify-content: flex-start; width: 218px; }
.s2 { margin-left: 10px; } .s3 { margin-left: 7px; } .s4 { margin-left: 12px; }
.tur { margin-left: 11px; width: 35px; letter-spacing: -.2px; }
.clock { width: 27px; letter-spacing: -.7px; }
.s5 { margin-left: 18px; }
.tray i { width: 1px; height: 30px; background: #77745f; margin-left: 19px; }
```
